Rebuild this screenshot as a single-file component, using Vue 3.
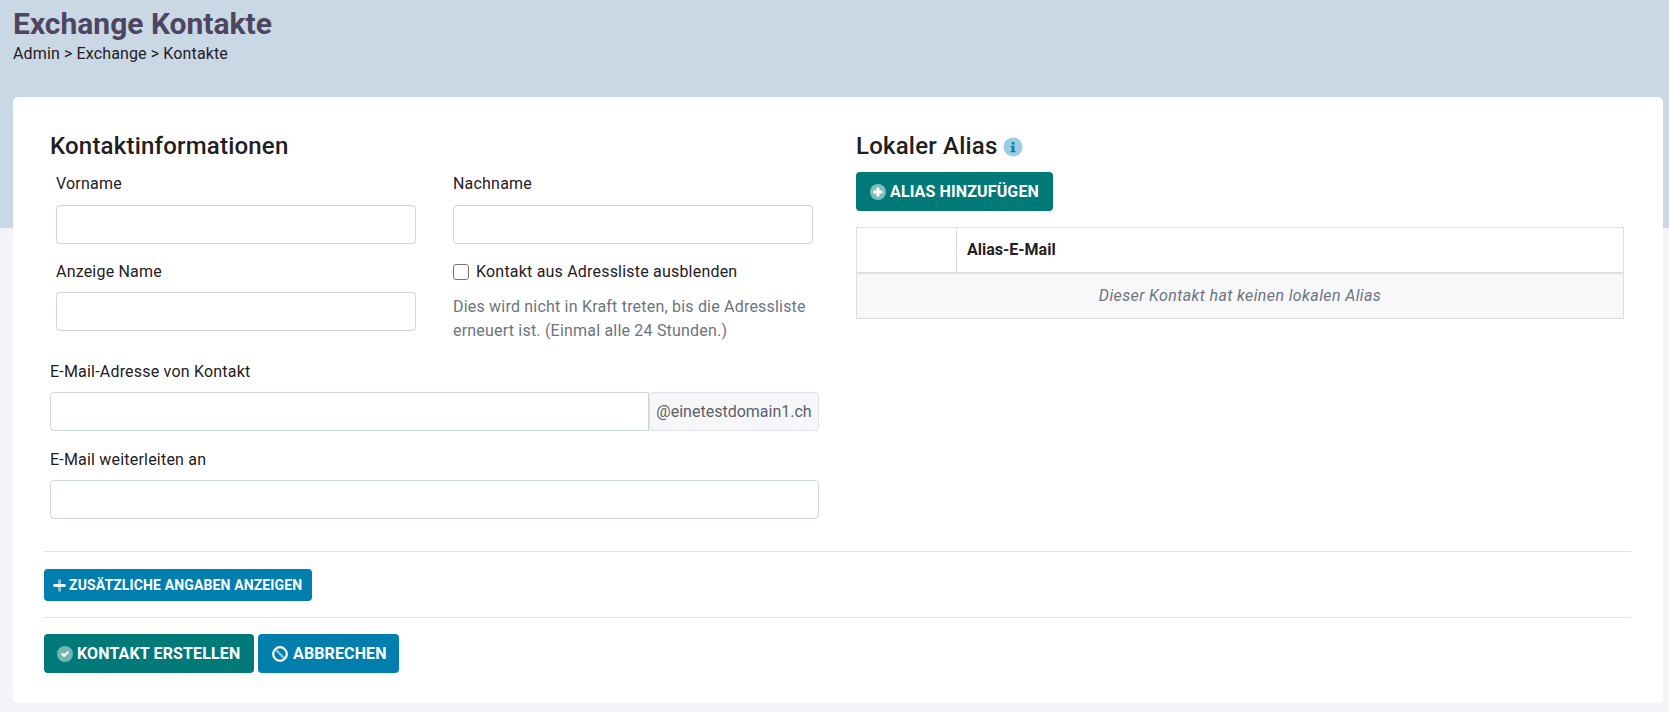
<script setup>
const alias = 'Dieser Kontakt hat keinen lokalen Alias'
</script>

<template>
  <div class="page">
    <header class="hero">
      <h1>Exchange Kontakte</h1>
      <div class="crumbs">Admin &gt; Exchange &gt; Kontakte</div>
    </header>
    <main class="card">
      <div class="columns">
        <section class="left">
          <h2>Kontaktinformationen</h2>
          <div class="split">
            <div class="col">
              <label class="lab first">Vorname</label>
              <input class="field" type="text" />
              <label class="lab second">Anzeige Name</label>
              <input class="field" type="text" />
            </div>
            <div class="col">
              <label class="lab first">Nachname</label>
              <input class="field" type="text" />
              <label class="check"><input type="checkbox" /><span>Kontakt aus Adressliste ausblenden</span></label>
              <p class="help">Dies wird nicht in Kraft treten, bis die Adressliste erneuert ist. (Einmal alle 24 Stunden.)</p>
            </div>
          </div>
          <label class="lab third">E-Mail-Adresse von Kontakt</label>
          <div class="group">
            <input class="field joined" type="text" />
            <span class="addon">@einetestdomain1.ch</span>
          </div>
          <label class="lab fourth">E-Mail weiterleiten an</label>
          <input class="field" type="text" />
        </section>
        <section class="right">
          <h2 class="alias-title">Lokaler Alias
            <svg class="info" viewBox="0 0 20 20" width="20" height="20">
              <circle cx="10" cy="10" r="9.5" fill="#9bcde0" />
              <rect x="8.8" y="5" width="2.6" height="2.6" rx=".6" fill="#0080ae" />
              <path d="M7.8 8.8h3.6v5h1v1.4H7.8v-1.4h1v-3.6h-1z" fill="#0080ae" />
            </svg>
          </h2>
          <button class="btn teal add" type="button">
            <svg viewBox="0 0 16 16" width="16" height="16">
              <circle cx="8" cy="8" r="8" fill="#fff" fill-opacity=".5" />
              <path d="M6.6 3.5h2.8v3.1h3.1v2.8H9.4v3.1H6.6V9.4H3.5V6.6h3.1z" fill="#fff" />
            </svg>
            ALIAS HINZUFÜGEN
          </button>
          <div class="table">
            <div class="thead">
              <div class="blank"></div>
              <div class="th">Alias-E-Mail</div>
            </div>
            <div class="empty">{{ alias }}</div>
          </div>
        </section>
      </div>
      <hr class="rule one" />
      <button class="btn blue small" type="button">
        <svg viewBox="0 0 14 14" width="13" height="13">
          <rect x="0.5" y="5.5" width="13" height="3" fill="#fff" />
          <rect x="5.5" y="0.5" width="3" height="13" fill="#fff" fill-opacity=".55" />
        </svg>
        ZUSÄTZLICHE ANGABEN ANZEIGEN
      </button>
      <hr class="rule two" />
      <div class="actions">
        <button class="btn teal create" type="button">
          <svg viewBox="0 0 16 16" width="16" height="16">
            <circle cx="8" cy="8" r="8" fill="#fff" fill-opacity=".45" />
            <path d="M4 8.2l1.5-1.5 1.6 1.6 3.4-3.4L12 6.4l-4.9 4.9z" fill="#fff" />
          </svg>
          KONTAKT ERSTELLEN
        </button>
        <button class="btn blue cancel" type="button">
          <svg viewBox="0 0 16 16" width="16" height="16">
            <circle cx="8" cy="8" r="6.8" fill="none" stroke="#fff" stroke-width="2.2" />
            <path d="M3.4 3.4l9.2 9.2" stroke="#fff" stroke-opacity=".55" stroke-width="2.2" />
          </svg>
          ABBRECHEN
        </button>
      </div>
    </main>
  </div>
</template>

<style>
html, body { margin: 0; background: #f4f4f8; }
</style>

<style scoped>
.page {
  font-family: Roboto, "Liberation Sans", sans-serif;
  color: #1f2023;
  width: 1669px;
  height: 712px;
  overflow: hidden;
}
.hero {
  height: 228px;
  background: #cad8e5;
  padding: 6px 13px 0;
  box-sizing: border-box;
}
h1 {
  margin: 0;
  font-size: 30px;
  line-height: 36px;
  font-weight: 700;
  color: #4d4661;
}
.crumbs {
  font-size: 16px;
  line-height: 20px;
  margin-top: 2px;
  letter-spacing: 0.13px;
}
.card {
  margin: -131px 6px 0 13px;
  height: 606px;
  box-sizing: border-box;
  background: #fff;
  border-radius: 5px;
  padding: 36px 32px 0 31px;
}
.columns {
  display: grid;
  grid-template-columns: 769px 767px;
  column-gap: 37px;
  padding-left: 6px;
  height: 418px;
}
h2 {
  margin: 0;
  font-size: 24px;
  line-height: 26px;
  font-weight: 500;
  letter-spacing: 0.2px;
}
.split {
  display: grid;
  grid-template-columns: 360px 360px;
  column-gap: 37px;
  padding-left: 6px;
}
.col { display: flex; flex-direction: column; align-items: stretch; }
.lab {
  display: block;
  font-size: 16px;
  line-height: 20px;
  letter-spacing: 0.2px;
}
.first { margin-top: 15px; margin-bottom: 11px; }
.second { margin-top: 18px; margin-bottom: 10px; }
.third { margin-top: 19px; margin-bottom: 10px; }
.fourth { margin-top: 19px; margin-bottom: 10px; }
.field {
  display: block;
  width: 100%;
  height: 39px;
  box-sizing: border-box;
  border: 1px solid #ced4da;
  border-radius: 4px;
  background: #fff;
  padding: 0 8px;
  outline: none;
}
.check {
  display: flex;
  align-items: center;
  gap: 7px;
  font-size: 16px;
  line-height: 20px;
  letter-spacing: 0.2px;
  margin-top: 18px;
}
.check input {
  appearance: none;
  width: 16px;
  height: 16px;
  margin: 0;
  border: 1px solid #767676;
  border-radius: 3px;
  background: #fff;
}
.help {
  margin: 13px 0 0;
  font-size: 16px;
  line-height: 24px;
  letter-spacing: 0.2px;
  color: #6c757d;
}
.group { display: flex; }
.joined { flex: 1; width: auto; border-radius: 4px 0 0 4px; }
.addon {
  width: 170px;
  height: 39px;
  box-sizing: border-box;
  display: flex;
  align-items: center;
  justify-content: center;
  border: 1px solid #dfe2e8;
  border-radius: 4px;
  background: #f7f7fa;
  color: #5c6067;
  font-size: 16px;
  white-space: nowrap;
}
.alias-title { display: flex; align-items: center; gap: 5px; }
.info { margin-top: 2px; }
.btn {
  display: flex;
  align-items: center;
  gap: 4px;
  border: 0;
  border-radius: 4px;
  color: #fff;
  font-family: inherit;
  font-weight: 700;
  font-size: 16px;
  letter-spacing: 0.13px;
  white-space: nowrap;
  padding: 0;
}
.teal { background: #007a78; }
.blue { background: #007fae; }
.add {
  margin-top: 13px;
  width: 197px;
  height: 39px;
  padding-left: 14px;
  box-sizing: border-box;
}
.table {
  margin-top: 16px;
  border: 1px solid #dedede;
  width: 768px;
  box-sizing: border-box;
}
.thead {
  display: grid;
  grid-template-columns: 100px 1fr;
  height: 44px;
  border-bottom: 2px solid #dedede;
}
.blank { border-right: 1px solid #dedede; }
.th {
  font-size: 16px;
  font-weight: 700;
  line-height: 43px;
  padding-left: 10px;
}
.empty {
  height: 44px;
  line-height: 43px;
  background: #f8f8fa;
  text-align: center;
  font-style: italic;
  font-size: 16px;
  letter-spacing: 0.38px;
  color: #6c757d;
}
.rule {
  margin: 0;
  border: 0;
  height: 1px;
  background: #e3e4e8;
}
.small {
  margin-top: 17px;
  width: 268px;
  height: 32px;
  padding-left: 9px;
  box-sizing: border-box;
  font-size: 14px;
  gap: 3px;
}
.two { margin-top: 16px; }
.actions { display: flex; gap: 4px; margin-top: 16px; }
.create, .cancel { height: 39px; box-sizing: border-box; padding-left: 13px; }
.create { width: 210px; }
.cancel { width: 141px; padding-left: 14px; gap: 5px; }
</style>
